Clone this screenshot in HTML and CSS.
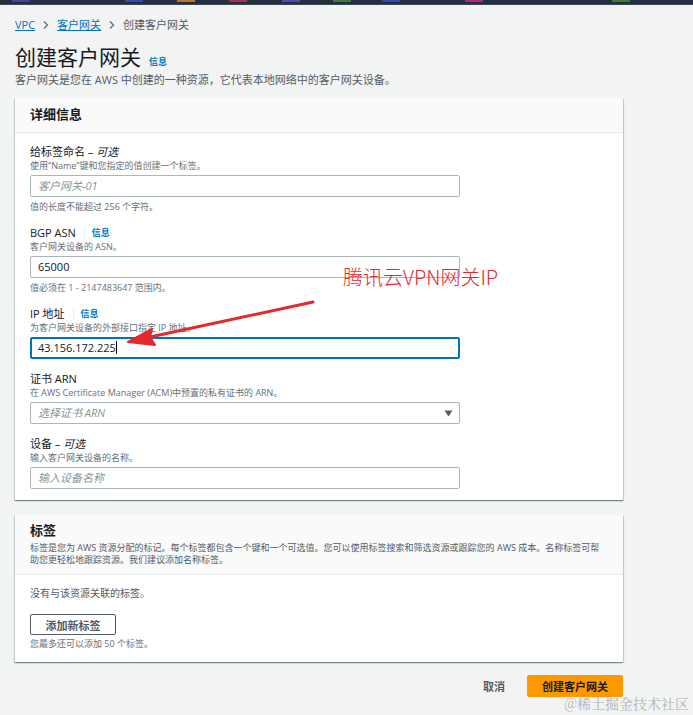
FILE: index.html
```html
<!DOCTYPE html>
<html lang="zh">
<head>
<meta charset="utf-8">
<link rel="stylesheet" href="styles.css">
</head>
<body>
<div class="topbar">
  <span class="seg s1"></span><span class="seg s2"></span><span class="seg s3"></span><span class="seg s4"></span><span class="seg s5"></span><span class="seg s6"></span><span class="seg s7"></span><span class="seg s8"></span><span class="seg s9"></span>
</div>
<div class="page">
  <nav class="crumbs">
    <a class="link">VPC</a>
    <svg class="chev" viewBox="0 0 10 10"><path d="M3 1.5 L6.5 5 L3 8.5" fill="none" stroke="#687078" stroke-width="1.4"/></svg>
    <a class="link">客户网关</a>
    <svg class="chev" viewBox="0 0 10 10"><path d="M3 1.5 L6.5 5 L3 8.5" fill="none" stroke="#687078" stroke-width="1.4"/></svg>
    <span class="cur">创建客户网关</span>
  </nav>
  <div class="title-row">
    <h1>创建客户网关</h1><span class="info">信息</span>
  </div>
  <p class="subtitle">客户网关是您在 AWS 中创建的一种资源，它代表本地网络中的客户网关设备。</p>

  <section class="card">
    <div class="card-head"><h2>详细信息</h2></div>
    <div class="card-body">
      <div class="field">
        <div class="label">给标签命名 – <i>可选</i></div>
        <div class="desc">使用“Name”键和您指定的值创建一个标签。</div>
        <div class="input placeholder">客户网关-01</div>
        <div class="hint">值的长度不能超过 256 个字符。</div>
      </div>
      <div class="field">
        <div class="label">BGP ASN <span class="sep"></span><span class="info">信息</span></div>
        <div class="desc">客户网关设备的 ASN。</div>
        <div class="input">65000</div>
        <div class="hint">值必须在 1 - 2147483647 范围内。</div>
      </div>
      <div class="field">
        <div class="label">IP 地址 <span class="sep"></span><span class="info">信息</span></div>
        <div class="desc">为客户网关设备的外部接口指定 IP 地址。</div>
        <div class="input focus">43.156.172.225<span class="caret"></span></div>
      </div>
      <div class="field">
        <div class="label">证书 ARN</div>
        <div class="desc">在 AWS Certificate Manager (ACM)中预置的私有证书的 ARN。</div>
        <div class="input placeholder select">选择证书 ARN<svg class="tri" viewBox="0 0 10 8"><path d="M0.5 0.5 H9.5 L5 7.5 Z" fill="#545b64"/></svg></div>
      </div>
      <div class="field">
        <div class="label">设备 – <i>可选</i></div>
        <div class="desc">输入客户网关设备的名称。</div>
        <div class="input placeholder">输入设备名称</div>
      </div>
    </div>
  </section>

  <section class="card card2">
    <div class="card-head tall">
      <h2>标签</h2>
      <p class="head-desc">标签是您为 AWS 资源分配的标记。每个标签都包含一个键和一个可选值。您可以使用标签搜索和筛选资源或跟踪您的 AWS 成本。名称标签可帮助您更轻松地跟踪资源。我们建议添加名称标签。</p>
    </div>
    <div class="card-body body2">
      <p class="empty">没有与该资源关联的标签。</p>
      <button class="btn-normal">添加新标签</button>
      <div class="hint">您最多还可以添加 50 个标签。</div>
    </div>
  </section>

  <div class="actions">
    <span class="cancel">取消</span>
    <button class="btn-primary">创建客户网关</button>
  </div>
</div>

<div class="annot">腾讯云VPN网关IP</div>
<svg class="arrow" width="693" height="715" viewBox="0 0 693 715">
  <path d="M313 302 L150 337" stroke="#e5282e" stroke-width="3" stroke-linecap="round" fill="none"/>
  <path d="M128 342 L152 329 L150 337 L155 345 Z" fill="#e5282e" stroke="#e5282e" stroke-width="2" stroke-linejoin="round"/>
</svg>
<div class="watermark">@稀土掘金技术社区</div>
</body>
</html>
```
FILE: styles.css
```css
* { box-sizing: border-box; }
html, body { margin: 0; padding: 0; }
body {
  background: #f2f3f3;
  font-family: "Open Sans", "Noto Sans CJK SC", sans-serif;
  color: #16191f;
  width: 693px;
  height: 715px;
  overflow: hidden;
  position: relative;
}
.topbar {
  height: 5px;
  background: #232f3e;
  position: relative;
  border-bottom: 1px solid #3b4654;
}
.seg { position: absolute; top: 0; height: 2px; width: 18px; }
.s1 { left: 12px; background: #4d3fa0; }
.s2 { left: 125px; background: #3b48a8; }
.s3 { left: 177px; background: #c07030; }
.s4 { left: 229px; background: #a8304a; }
.s5 { left: 282px; background: #5a44a8; }
.s6 { left: 333px; background: #3d7a3d; }
.s7 { left: 382px; background: #3b48a8; }
.s8 { left: 465px; background: #a8306a; }
.s9 { left: 612px; background: #3d7a3d; }

.page { padding: 12px 70px 0 15px; }
.crumbs {
  display: flex; align-items: center; gap: 6px;
  font-size: 11px; line-height: 16px; height: 16px;
}
.crumbs .link { color: #0073bb; text-decoration: underline; }
.crumbs .cur { color: #545b64; }
.chev { width: 10px; height: 10px; }

.title-row { display: flex; align-items: baseline; gap: 8px; margin-top: 11px; }
h1 { font-size: 21px; font-weight: 400; margin: 0; line-height: 26px; color: #16191f; }
.info { color: #0073bb; font-size: 9px; font-weight: 700; }
.subtitle { margin: 3px 0 0; font-size: 11px; line-height: 14px; color: #545b64; }

.card {
  background: #fff;
  margin-top: 11px;
  box-shadow: 0 1px 1px 0 rgba(0,28,36,.3), 1px 1px 1px 0 rgba(0,28,36,.15), -1px 1px 1px 0 rgba(0,28,36,.15);
}
.card-head {
  background: #fafafa;
  border-bottom: 1px solid #eaeded;
  padding: 7px 15px 0;
  height: 35px;
}
.card-head.tall { height: 60px; padding-top: 6px; }
h2 { margin: 0; font-size: 13px; font-weight: 700; line-height: 18px; }
.head-desc { margin: 3px 0 0; font-size: 9px; line-height: 12px; color: #545b64; }
.card-body { padding: 11px 15px 11px; }
.field { margin-bottom: 12px; }
.field:last-child { margin-bottom: 0; }
.label { font-size: 11px; line-height: 16px; display: flex; align-items: center; gap: 0; }
.label i { font-style: italic; margin-left: 3px; }
.sep { display: inline-block; width: 1px; height: 12px; background: #eaeded; margin: 0 7px 0 8px; }
.label .info { font-size: 9px; }
.desc { font-size: 9px; line-height: 12px; color: #687078; margin-bottom: 3px; }
.input {
  width: 430px; height: 22px;
  border: 1px solid #aab7b8;
  border-radius: 2px;
  font-size: 11px; line-height: 20px;
  padding: 0 7px;
  color: #16191f;
  position: relative;
}
.input.placeholder { color: #879596; font-style: italic; }
.input.focus { border: 2px solid #0073bb; line-height: 18px; padding: 0 6px; }
.caret { display: inline-block; width: 1px; height: 13px; background: #000; vertical-align: -2px; }
.select .tri { position: absolute; right: 6px; top: 7px; width: 9px; height: 7px; }
.hint { font-size: 9px; line-height: 12px; color: #687078; margin-top: 4px; }

.card2 { margin-top: 15px; }
.body2 { padding: 11px 15px 12px; }
.empty { margin: 0 0 14px; font-size: 10px; line-height: 14px; color: #545b64; }
.btn-normal {
  display: block;
  width: 86px; height: 21px;
  background: #fff; border: 1px solid #545b64; border-radius: 2px;
  font-family: inherit; font-size: 11px; font-weight: 700; color: #545b64;
  padding: 0;
}
.body2 .hint { margin-top: 3px; }

.actions { display: flex; justify-content: flex-end; align-items: center; gap: 22px; margin-top: 13px; }
.cancel { font-size: 11px; font-weight: 700; color: #545b64; }
.btn-primary {
  width: 96px; height: 22px;
  background: #ff9900; border: 1px solid #ff9900; border-radius: 2px;
  font-family: inherit; font-size: 11px; font-weight: 700; color: #16191f;
  padding: 0;
}

.annot {
  position: absolute; left: 343px; top: 263px;
  font-family: "Noto Sans CJK SC", "Noto Sans", sans-serif;
  font-size: 20px; line-height: 28px; font-weight: 300; color: #e5282e;
}
.arrow { position: absolute; left: 0; top: 0; pointer-events: none; }
.watermark {
  position: absolute; right: 4px; top: 693px;
  font-family: "Noto Serif CJK SC", "Liberation Serif", serif;
  font-size: 14px; line-height: 20px; color: rgba(120,120,120,0.55);
}
```
